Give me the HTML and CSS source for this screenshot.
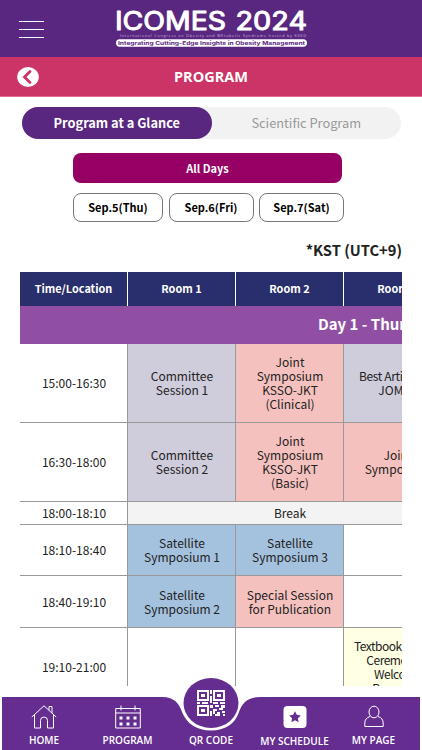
FILE: index.html
```html
<!DOCTYPE html>
<html lang="en">
<head>
<meta charset="utf-8">
<meta name="viewport" content="width=device-width, initial-scale=1">
<title>ICOMES 2024 - Program</title>
<link rel="stylesheet" href="styles.css">
</head>
<body>
<div class="app">
  <header class="topbar">
    <button class="menu" aria-label="Menu"><span></span><span></span><span></span></button>
    <svg class="logo" width="194" height="40" viewBox="0 0 194 40">
      <text class="logo-name" x="0" y="20.800" textLength="111" lengthAdjust="spacingAndGlyphs">ICOMES</text>
      <text class="logo-name" x="120.500" y="20.800" textLength="71.500" lengthAdjust="spacingAndGlyphs">2024</text>
      <text class="logo-sub" x="5" y="27.700" textLength="186" lengthAdjust="spacing">International Congress on Obesity and MEtabolic Syndrome hosted by KSSO</text>
      <rect x="1" y="30.200" width="191" height="7.500" rx="3.700" fill="#fff"/>
      <text class="logo-tag" x="3" y="36" textLength="187" lengthAdjust="spacingAndGlyphs">Integrating Cutting-Edge Insights in Obesity Management</text>
    </svg>
  </header>
  <div class="titlebar">
    <svg class="back" width="22" height="22" viewBox="0 0 22 22"><ellipse cx="11" cy="11" rx="10.800" ry="10" fill="#fff"/><path d="M13 5.500 7.500 11l5.500 5.500" fill="none" stroke="#cc3366" stroke-width="2.800" stroke-linecap="round"/></svg>
    <h1>PROGRAM</h1>
  </div>
  <main>
    <div class="tabs"><a class="tab active">Program at a Glance</a><a class="tab">Scientific Program</a></div>
    <div class="days">
      <a class="all">All Days</a>
      <a class="day">Sep.5(Thu)</a><a class="day">Sep.6(Fri)</a><a class="day">Sep.7(Sat)</a>
    </div>
    <p class="zone">*KST (UTC+9)</p>
    <div class="scroller">
      <table>
        <colgroup><col><col><col><col></colgroup>
        <tr class="head"><th>Time/Location</th><th>Room 1</th><th>Room 2</th><th>Room 3</th></tr>
        <tr class="date"><th colspan="4">Day 1 - Thursday</th></tr>
        <tr class="r79"><td>15:00-16:30</td><td class="gray">Committee<br>Session 1</td><td class="pink">Joint<br>Symposium<br>KSSO-JKT<br>(Clinical)</td><td class="gray"><span class="tight">Best Article in</span><br>JOMES</td></tr>
        <tr class="r79"><td>16:30-18:00</td><td class="gray">Committee<br>Session 2</td><td class="pink">Joint<br>Symposium<br>KSSO-JKT<br>(Basic)</td><td class="pink">Joint<br>Symposium</td></tr>
        <tr class="r22"><td>18:00-18:10</td><td class="break" colspan="3">Break</td></tr>
        <tr class="r52"><td>18:10-18:40</td><td class="blue">Satellite<br>Symposium 1</td><td class="blue">Satellite<br>Symposium 3</td><td></td></tr>
        <tr class="r52"><td>18:40-19:10</td><td class="blue">Satellite<br>Symposium 2</td><td class="pink">Special Session<br>for Publication</td><td></td></tr>
        <tr class="r79"><td>19:10-21:00</td><td></td><td></td><td class="cream">Textbook Launch<br>Ceremony &amp;<br>Welcome<br>Reception</td></tr>
      </table>
    </div>
  </main>
  <nav class="nav">
    <svg class="nav-bg" width="422" height="74" viewBox="0 0 422 74">
      <path d="M2 21H162C175 21 179 28 182 36C187 48 197 54.500 211 54.500S235 48 239 36C242 27 248 21 260 21H420V74H2Z" fill="#662d91"/>
      <ellipse cx="211" cy="27" rx="27.500" ry="25" fill="#662d91"/>
    </svg>
    <a class="item home"><svg width="26" height="24" viewBox="0 0 26 24"><path d="M.8 12 13 .8 25.200 12M3.500 10v13h6v-7.500a3.500 3.500 0 0 1 7 0V23h6V10M18 5V1.500h3V8"/></svg><span>HOME</span></a>
    <a class="item"><svg width="26" height="24" viewBox="0 0 26 24"><path d="M.7 3.500h24.600v19.500H.7zM.7 8h24.600M6 .5v5M20 .5v5"/><path class="solid" d="M4.500 11.500h3v3h-3zm7 0h3v3h-3zm7 0h3v3h-3zm-14 6h3v3h-3zm7 0h3v3h-3zm7 0h3v3h-3z"/></svg><span>PROGRAM</span></a>
    <a class="item qr"><svg width="28" height="26" viewBox="0 0 28 26"><path class="solid" fill-rule="evenodd" d="M0 0h12v11H0zm2 2v7h8V2zM4 4h4v3H4zM16 0h12v11H16zm2 2v7h8V2zm2 2h4v3h-4zM0 15h12v11H0zm2 2v7h8v-7zm2 2h4v3H4zM13 0h2v4h-2zM13 6h2v7h-2zM0 12h3v2H0zm5 0h6v2H5zm8 3h3v3h-3zm3-3h5v2h-5zm7 0h5v2h-5zm-5 3h4v2h-4zm6 0h4v3h-2v2h-4v-2h2zm-8 4h4v2h-2v3h-2zm-3 2h2v5h-2zm7 1h3v4h-5v-2h2zm5-1h3v2h-3zm1 3h2v2h-2z"/></svg><span>QR CODE</span></a>
    <a class="item sched"><svg width="24" height="24" viewBox="0 0 24 24"><rect class="solid" x=".5" y="1" width="23" height="22" rx="4"/><path class="star" d="m12 6.200 1.800 3.600 4 .6-2.900 2.800.7 4-3.600-1.900-3.600 1.900.7-4-2.900-2.800 4-.6z"/></svg><span>MY SCHEDULE</span></a>
    <a class="item page"><svg width="20" height="24" viewBox="0 0 20 24"><ellipse cx="10" cy="7" rx="5" ry="5.800"/><path d="M6 11.500C2.500 12.500.8 15 .8 18v3.500h18.400V18c0-3-1.700-5.500-5.200-6.500"/></svg><span>MY PAGE</span></a>
  </nav>
</div>
</body>
</html>
```
FILE: styles.css
```css
* { box-sizing: border-box; }
body { margin: 0; background: #fff; font-family: "Noto Sans CJK KR", "Noto Sans", sans-serif; color: #222; }
.app { width: 422px; height: 750px; overflow: hidden; display: flex; flex-direction: column; position: relative; }
.topbar { height: 57px; background: #592680; display: flex; align-items: flex-start; flex: none; }
.menu { margin: 21px 0 0 19px; width: 25px; height: 17px; padding: 0; border: 0; background: none; display: flex; flex-direction: column; justify-content: space-between; }
.menu span { height: 1px; background: #fff; width: 25px; }
.logo { margin: 9px 0 0 71px; overflow: visible; }
.logo-name { font: 400 25px Inter, sans-serif; fill: #fff; stroke: #fff; stroke-width: 1px; stroke-linejoin: round; }
.logo-sub { font: 400 3.700px "Open Sans", sans-serif; fill: #d0bfe0; }
.logo-tag { font: 700 5px Inter, sans-serif; fill: #592680; }
.titlebar { height: 40px; background: #cc3366; flex: none; display: flex; align-items: center; padding-left: 17px; border-bottom: 1px solid #dc6f94; }
.titlebar h1 { margin: 0 39px 0 0; flex: 1; text-align: center; color: #fff; font: 700 14.500px/20px "Open Sans", sans-serif; }
main { flex: 1; }
.tabs { margin: 10px 21px 0 22px; height: 32px; border-radius: 16px; background: #f2f2f2; display: flex; }
.tab { flex: 1; text-align: center; font-size: 12.800px; line-height: 31px; color: #999; border-radius: 16px; }
.tab.active { background: #592680; color: #fff; font-weight: 700; }
.days { display: grid; grid-template-columns: 90px 85px 85px; column-gap: 5.500px; row-gap: 10px; margin: 14px 0 0 73px; width: 271px; }
.all { grid-column: 1 / 4; width: 269px; height: 30px; border-radius: 8px; background: #960064; color: #fff; font-weight: 700; font-size: 11px; line-height: 30px; text-align: center; }
.day { height: 29px; border: 1px solid #777; border-radius: 8px; color: #000; font-weight: 700; font-size: 11px; line-height: 27px; text-align: center; }
.zone { margin: 17px 20px 0 0; text-align: right; font-weight: 700; font-size: 14.700px; line-height: 22px; }
.scroller { margin: 11px 20px 0; height: 414px; width: 382px; overflow: hidden; }
table { width: 432px; table-layout: fixed; border-collapse: separate; border-spacing: 0; font-size: 12px; line-height: 13.800px; text-align: center; }
td { padding: 0 0 0 1px; border-right: 1px solid #999; border-bottom: 1px solid #999; white-space: nowrap; }
th { padding: 0; }
.head { height: 34px; background: #292f6c; color: #fff; font-size: 10.900px; }
.head th { border-right: 1px solid #fff; }
.date { height: 38px; background: #914fa3; color: #fff; font-size: 15px; }
.date th { text-align: left; padding: 0 0 2px 298px; white-space: nowrap; }
.r79 { height: 79px; }
.r22 { height: 22.500px; }
.r52 { height: 51.750px; }
.gray { background: #cfccdc; }
.tight { letter-spacing: -.35px; margin-right: -1px; position: relative; left: -4px; }
.pink { background: #f5c1be; }
.blue { background: #a4c1de; }
.break { background: #f3f3f3; }
.cream { background: #ffffe3; letter-spacing: -.5px; }
.nav { position: absolute; left: 0; bottom: 0; width: 422px; height: 74px; display: grid; grid-template-columns: 84px 83px 84px 83px 75px; padding-left: 2px; }
.nav-bg { position: absolute; left: 0; top: 0; }
.item { position: relative; display: flex; flex-direction: column; align-items: center; padding-top: 29px; color: #fff; font: 600 10px/14px "Open Sans", sans-serif; white-space: nowrap; }
.item span { margin-top: 4px; }
.item svg { fill: none; stroke: #fff; stroke-width: 1; flex: none; }
.item .solid { fill: #fff; stroke: none; }
.item .star { fill: #662d91; stroke: none; }
.sched span { margin-top: 5px; }
.qr { padding-top: 14px; }
.qr span { margin-top: 17px; }
```
